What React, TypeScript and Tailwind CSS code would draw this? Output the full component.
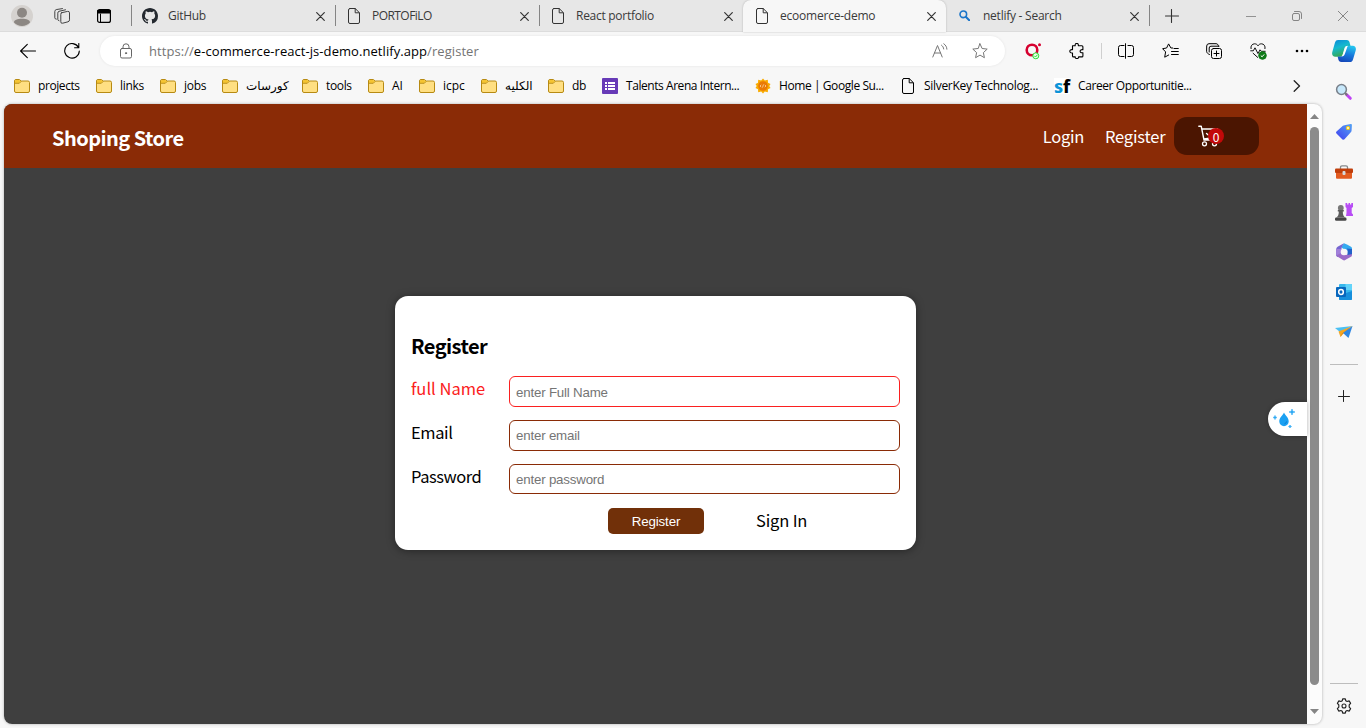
import React from "react";

type SvgProps = { className?: string; children: React.ReactNode; box?: string };

function Line({ className = "size-4", children, box = "0 0 16 16" }: SvgProps) {
  return (
    <svg viewBox={box} className={className} fill="none" stroke="currentColor" strokeLinecap="round" strokeLinejoin="round">
      {children}
    </svg>
  );
}

const Close = () => (
  <Line className="size-[9px] text-[#333]" box="0 0 9 9">
    <path d="M.7.7l7.6 7.6M8.3.7L.7 8.3" strokeWidth="1.2" />
  </Line>
);

const Page = () => (
  <Line className="h-4 w-3 shrink-0" box="0 0 12 16">
    <path d="M2 .5h5.200l4.300 4.300v9.200a1.500 1.500 0 0 1-1.500 1.500H2A1.500 1.500 0 0 1 .5 14V2A1.500 1.500 0 0 1 2 .5zM7.200.8V4.800h4" strokeWidth="1" />
  </Line>
);

const Folder = () => (
  <svg viewBox="0 0 16 14" className="h-[14px] w-4 shrink-0">
    <path d="M.5 2A1.5 1.5 0 0 1 2 .5h3.2L7.3 2H14a1.5 1.5 0 0 1 1.5 1.5V12a1.5 1.5 0 0 1-1.5 1.5H2A1.5 1.5 0 0 1 .5 12z" fill="#ffdf82" stroke="#b78a12" />
    <path d="M1 2.2A1.2 1.2 0 0 1 2.2 1H5l2 1.4L5.2 4H1z" fill="#f5c431" />
    <path d="M.7 4.3h4.6l2-2" fill="none" stroke="#b78a12" strokeWidth=".9" />
  </svg>
);

const GitHub = () => (
  <svg viewBox="0 0 16 16" className="-ml-[2px] size-4 shrink-0" fill="#24292f">
    <path d="M8 0C3.58 0 0 3.58 0 8c0 3.54 2.29 6.53 5.47 7.59.4.07.55-.17.55-.38 0-.19-.01-.82-.01-1.49-2.01.37-2.53-.49-2.69-.94-.09-.23-.48-.94-.82-1.13-.28-.15-.68-.52-.01-.53.63-.01 1.08.58 1.23.82.72 1.21 1.87.87 2.33.66.07-.52.28-.87.51-1.07-1.78-.2-3.64-.89-3.64-3.95 0-.87.31-1.59.82-2.15-.08-.2-.36-1.02.08-2.12 0 0 .67-.21 2.2.82a7.6 7.6 0 0 1 4 0c1.53-1.04 2.2-.82 2.2-.82.44 1.1.16 1.92.08 2.12.51.56.82 1.27.82 2.15 0 3.07-1.87 3.75-3.65 3.95.29.25.54.73.54 1.48 0 1.07-.01 1.93-.01 2.2 0 .21.15.46.55.38A8.01 8.01 0 0 0 16 8c0-4.42-3.58-8-8-8z" />
  </svg>
);

const BingSearch = () => (
  <Line className="size-[11px] text-[#1b75c9]" box="0 0 11 11">
    <circle cx="4.3" cy="4.3" r="3.3" strokeWidth="1.6" />
    <path d="M7 7l3.2 3.2" strokeWidth="2" />
  </Line>
);

type TabData = { icon: React.ReactNode; title: string; text: string; width: string; active?: boolean; sep?: boolean };

const tabs: TabData[] = [
  { icon: <GitHub />, title: "GitHub", text: "tracking-[-0.3px]", width: "w-[204px]", sep: true },
  { icon: <Page />, title: "PORTOFiLO", text: "tracking-[-0.55px]", width: "w-[204px]", sep: true },
  { icon: <Page />, title: "React portfolio", text: "tracking-[-0.28px]", width: "w-[204px]", sep: true },
  { icon: <Page />, title: "ecoomerce-demo", text: "tracking-[-0.22px]", width: "w-[203px]", active: true },
  { icon: <BingSearch />, title: "netlify - Search", text: "tracking-[-0.25px]", width: "w-[203px]" },
];

function Tab({ tab }: { tab: TabData }) {
  const shape = tab.active ? "bg-[#f7f7f7] rounded-t-lg h-8 pb-px shadow-[0_0_2px_rgba(0,0,0,0.25)] z-10" : "h-[31px]";
  return (
    <div className={`flex shrink-0 items-center ${tab.width} ${shape}`}>
      <div className={`h-[21px] w-px ${tab.sep ? "bg-[#858585]" : ""}`} />
      <div className="ml-[10px] flex w-4 justify-start pl-[2px] text-[#333]">{tab.icon}</div>
      <div className={`ml-[10px] flex-1 whitespace-nowrap text-[12px] leading-4 text-[#3a3a3a] ${tab.text}`}>{tab.title}</div>
      <div className="mr-[10px] pt-px"><Close /></div>
    </div>
  );
}

function TabStrip() {
  return (
    <div className="flex h-8 shrink-0 items-start border-b border-[#dcdcdc] bg-[#e7e7e7]">
      <div className="flex h-[31px] w-[131px] shrink-0 items-center">
        <svg viewBox="0 0 22 22" className="ml-[11px] size-[22px]">
          <circle cx="11" cy="11" r="11" fill="#d5d2cf" />
          <circle cx="11" cy="7.7" r="5" fill="#8c8783" />
          <path d="M3 17.6c0-2.7 3.2-3.8 8-3.8s8 1.1 8 3.8A11 11 0 0 1 11 21a11 11 0 0 1-8-3.400z" fill="#8c8783" />
        </svg>
        <Line className="ml-[21px] h-4 w-[17px] text-[#444]" box="0 0 17 16">
          <path d="M7.5 4.8l6-1.4a1.6 1.6 0 0 1 2 1.500v6.900a2 2 0 0 1-1.500 2l-5.300 1.400a1.500 1.500 0 0 1-1.900-1.500V6.700c0-.9.100-1.700.700-1.900z" />
          <path d="M5 12.800a1.500 1.500 0 0 1-1.200-1.500V5.200c0-1 .4-1.700 1.200-1.900L11.500 1.800M2.300 11.200A1.500 1.500 0 0 1 .8 9.800V3.500c0-1 .6-1.700 1.400-1.900L8.500.6" />
        </Line>
        <Line className="ml-[26px] h-[14px] w-[14px] text-black" box="0 0 14 14">
          <rect x=".6" y=".6" width="12.800" height="12.800" rx="2" strokeWidth="1.200" />
          <path d="M1 2h12M1 3.500h12" strokeWidth="1.800" />
          <path d="M3.500 5v8" />
        </Line>
      </div>
      {tabs.map((t) => <Tab key={t.title} tab={t} />)}
      <div className="flex h-[31px] flex-1 items-center">
        <div className="h-[21px] w-px bg-[#858585]" />
        <Line className="ml-[15px] size-[14px] text-[#333]" box="0 0 14 14"><path d="M6.500 .5v13M.5 7h13" strokeWidth="1.100" /></Line>
        <Line className="ml-[67px] size-[10px] text-[#929292]" box="0 0 10 10"><path d="M0 5.500h10" /></Line>
        <Line className="ml-[36px] size-[10px] text-[#858585]" box="0 0 10 10">
          <rect x=".5" y="2.500" width="7" height="7" rx="1.500" />
          <path d="M2.500.5H7A2.500 2.500 0 0 1 9.500 3v4.500" />
        </Line>
        <Line className="ml-[36px] size-[10px] text-[#858585]" box="0 0 10 10"><path d="M.3.3l9.400 9.400M9.700.3L.3 9.700" /></Line>
      </div>
    </div>
  );
}

const Star = ({ className }: { className: string }) => (
  <Line className={className}>
    <path d="M8 .8l2.100 4.700 5.100.6-3.800 3.500 1 5.100L8 12.100l-4.400 2.600 1-5.100L.8 6.100l5.100-.6z" />
  </Line>
);

function Toolbar() {
  return (
    <div className="flex h-[39px] shrink-0 items-center pb-px">
      <Line className="ml-[20px] h-4 w-4 text-black"><path d="M15.500 8H.7M7.300 1.300L.6 8l6.700 6.700" strokeWidth="1.100" /></Line>
      <Line className="ml-[28px] size-4 text-black">
        <path d="M14.500 4.500A7.300 7.300 0 1 0 15.300 8M14.800.5v4.200h-4.200" strokeWidth="1.100" />
      </Line>
      <div className="ml-[20px] flex h-[30px] w-[905px] items-center rounded-full bg-white shadow-[0_0_3px_rgba(0,0,0,0.08)]">
        <Line className="ml-[20px] h-4 w-3 text-[#666]" box="0 0 12 16">
          <rect x=".5" y="5.500" width="11" height="9.500" rx="1.500" />
          <path d="M3 5.500V3.800a3 3 0 0 1 6 0v1.700" />
          <circle cx="6" cy="10.200" r=".6" fill="currentColor" />
        </Line>
        <div className="ml-[17px] flex-1 whitespace-nowrap text-[13px] leading-5 tracking-[0.065px] text-[#747474]">
          https://<span className="text-black">e-commerce-react-js-demo.netlify.app</span>/register
        </div>
        <svg viewBox="0 0 16 16" className="size-4" fill="none" stroke="#777">
          <path d="M.8 14L5.500 2.500 10.200 14M2.400 10h6.200M9.500 2.200c1.300.9 2 2.200 2.200 3.800M11.800.8c2 1.300 3 3.200 3.100 5.400" strokeLinecap="round" />
        </svg>
        <Star className="ml-[24px] mr-[17px] size-4 text-[#777]" />
      </div>
      <svg viewBox="0 0 17 17" className="ml-[20px] size-[17px]">
        <circle cx="7" cy="7" r="5.300" fill="none" stroke="#d6002f" strokeWidth="2.600" />
        <circle cx="14.500" cy="1.800" r="1.500" fill="#d6002f" />
        <circle cx="10.800" cy="12.800" r="3" fill="#e4ffe4" stroke="#2be038" />
        <path d="M9.300 12.800l1.200 1.200 2-2.300" fill="none" stroke="#2be038" />
      </svg>
      <Line className="ml-[27px] h-4 w-4 text-black">
        <path d="M3.500 2.800h2.700c-.3-1.700.5-2.400 1.500-2.400s1.900.7 1.600 2.400h3.600a1 1 0 0 1 1 1v2.900c-1.700-.3-2.800.4-2.800 1.500s1.100 1.800 2.800 1.500v3.200a1 1 0 0 1-1 1H9.600c.2 1-.7 1.700-1.700 1.700s-1.900-.7-1.700-1.700H4.500a1 1 0 0 1-1-1V10C1.800 10.200.8 9.400.8 8.300s1-1.900 2.700-1.600z" strokeWidth="1.100" />
      </Line>
      <div className="ml-[16px] h-4 w-px bg-[#cfcfcf]" />
      <Line className="ml-[16px] h-4 w-4 text-black">
        <path d="M6 2.500H2.500a2 2 0 0 0-2 2v7a2 2 0 0 0 2 2H6M7.500.7v14.600M10 2.500h3.500a2 2 0 0 1 2 2v7a2 2 0 0 1-2 2H10" />
      </Line>
      <Line className="ml-[28px] h-4 w-[17px] text-black" box="0 0 17 16">
        <path d="M10.700 5H8.900L6.600.9 4.600 5 .6 5.700l3 3.200-.9 5.300 4-2.200M9.500 8.500h6.800M9.500 11.500h6.800M12 5.500h4.300" />
      </Line>
      <Line className="ml-[27px] size-4 text-black">
        <rect x="5.500" y="5.500" width="10" height="10" rx="2" />
        <path d="M10.500 8v5M8 10.500h5M3.500 11.500C2 11 .7 9.800.6 8.300L.7 3A2.400 2.400 0 0 1 3 .7h7.100c1.300 0 2.200 1 2.400 2.500M3.200 9V5a1.800 1.800 0 0 1 1.800-1.800h8" />
      </Line>
      <svg viewBox="0 0 17 17" className="ml-[28px] size-[17px]" fill="none" stroke="#111">
        <path d="M1.100 6C.3 3 2.200.8 4.600.8 6.200.8 7.400 1.700 8 2.800 8.600 1.700 9.800.8 11.400.8c2.400 0 4.300 2.200 3.500 5.200M2.800 10L8 14.700M.3 7.800h3L5 4.800l3 5.800 2-3.800 1.300 1.500h4.300" />
        <circle cx="12.500" cy="12.500" r="3.800" fill="#0f7a18" stroke="#0f7a18" />
        <path d="M10.800 12.600l1.300 1.200 2.100-2.400" stroke="#fff" />
      </svg>
      <svg viewBox="0 0 14 4" className="ml-[28px] h-1 w-[14px]"><circle cx="2" cy="2" r="1.300" /><circle cx="7" cy="2" r="1.300" /><circle cx="12" cy="2" r="1.300" /></svg>
      <svg viewBox="0 0 24 22" className="ml-[23px] h-[22px] w-6">
        <defs>
          <linearGradient id="cpA" x1="0" y1="0" x2=".4" y2="1"><stop stopColor="#0a86d8" /><stop offset=".5" stopColor="#15b9cf" /><stop offset="1" stopColor="#37a84e" /></linearGradient>
          <linearGradient id="cpB" x1=".6" y1="0" x2=".3" y2="1"><stop stopColor="#23c3ee" /><stop offset=".5" stopColor="#1778dc" /><stop offset="1" stopColor="#1546b8" /></linearGradient>
        </defs>
        <path d="M6 0h8.500c2.300 0 3 1.600 3.500 4l.5 2h-3c-2 0-2.700 1-3.200 2.700l-1.500 5.200c-.7 2-1.600 2.800-3.300 2.800H3.300C.7 16.700-.4 14.500.3 12L3 2.600C3.600.8 4.600 0 6 0z" fill="url(#cpA)" />
        <path d="M18 22H9.500c-2.300 0-3-1.600-3.500-4l-.4-1.500h3c2 0 2.700-1 3.200-2.700l1.500-5.200c.7-2 1.600-2.800 3.300-2.800h4.100c2.600 0 3.700 2.200 3 4.700L21 19.400c-.6 1.800-1.600 2.600-3 2.600z" fill="url(#cpB)" />
        <path d="M11.200 13.800L13 7.900c.5-1.500 1.200-2 2.800-2.100l-3 8.200c-.6 1.700-1.300 2.300-3 2.400.7-.6 1.100-1.500 1.400-2.600z" fill="#fff" />
      </svg>
    </div>
  );
}

const Forms = () => (
  <svg viewBox="0 0 16 16" className="size-4 shrink-0">
    <rect width="16" height="16" rx="1" fill="#673ab7" />
    <path d="M3 4h2v2H3zM6 4h7v2H6zM3 7h2v2H3zM6 7h7v2H6zM3 10h2v2H3zM6 10h7v2H6z" fill="#fff" />
  </svg>
);

const Sun = () => (
  <svg viewBox="0 0 16 16" className="size-4 shrink-0">
    <path d="M8 .5l1.800 1.900 3-.7.2 3 2.500 1.300L14.300 8l1.200 2-2.500 1.300-.2 3-3-.7L8 15.500l-1.800-1.900-3 .7-.2-3L.5 10l1.200-2L.5 6 3 4.700l.2-3 3 .7z" fill="#f9ab00" />
    <circle cx="8" cy="8" r="4.800" fill="#ea7a06" />
    <path d="M6.200 6.800L5 8l1.200 1.200M9.800 6.800L11 8 9.800 9.200M8.500 6.500l-1 3" fill="none" stroke="#fde5bd" strokeWidth=".7" />
  </svg>
);

const SfLogo = () => (
  <span className="flex h-4 w-4 shrink-0 items-center justify-center bg-white font-['Noto_Sans'] text-[18px] font-extrabold leading-4 tracking-[-0.3px] text-[#0d94d8]">
    s<span className="text-black">f</span>
  </span>
);

const bookmarks = [
  { name: "projects", width: "w-[82px]", text: "tracking-[-0.42px]", icon: <Folder /> },
  { name: "links", width: "w-[64px]", text: "tracking-[-0.3px]", icon: <Folder /> },
  { name: "jobs", width: "w-[62px]", text: "tracking-[-0.3px]", icon: <Folder /> },
  { name: "كورسات", width: "w-[80px]", text: "text-[11.500px]", icon: <Folder /> },
  { name: "tools", width: "w-[66px]", text: "tracking-[-0.35px]", icon: <Folder /> },
  { name: "AI", width: "w-[51px]", text: "tracking-[-0.1px]", icon: <Folder /> },
  { name: "icpc", width: "w-[62px]", text: "tracking-[0px]", icon: <Folder /> },
  { name: "الكليه", width: "w-[67px]", text: "text-[11.500px]", icon: <Folder /> },
  { name: "db", width: "w-[54px]", text: "tracking-[-0.3px]", icon: <Folder /> },
  { name: "Talents Arena Intern...", width: "w-[153px]", text: "tracking-[-0.44px]", icon: <Forms /> },
  { name: "Home | Google Su...", width: "w-[147px]", text: "tracking-[-0.42px]", icon: <Sun /> },
  { name: "SilverKey Technolog...", width: "w-[152px]", text: "-ml-[2px] tracking-[-0.3px]", icon: <Page /> },
  { name: "Career Opportunitie...", width: "w-[239px]", text: "tracking-[-0.4px]", icon: <SfLogo /> },
];

function Bookmarks() {
  return (
    <div className="flex h-[33px] shrink-0 items-center pb-1 pl-[14px]">
      {bookmarks.map((b) => (
        <div key={b.name} className={`flex shrink-0 items-center text-black ${b.width}`}>
          <span className="flex w-6 shrink-0">{b.icon}</span>
          <span className={`whitespace-nowrap text-[12px] leading-4 ${b.text}`}>{b.name}</span>
        </div>
      ))}
      <Line className="h-3 w-2 text-[#222]" box="0 0 8 12"><path d="M1.200.8L6.500 6l-5.300 5.200" strokeWidth="1.300" /></Line>
    </div>
  );
}

function StoreHeader() {
  return (
    <header className="flex h-[63.5px] shrink-0 items-center bg-[#8a2b06] pl-12 pr-[48px] text-white">
      <h1 className="flex-1 pt-1 text-[20px] font-bold leading-7 tracking-[-0.54px]">Shoping Store</h1>
      <a className="text-[16.500px] leading-6 tracking-[-0.3px]">Login</a>
      <a className="ml-[21px] w-[60px] whitespace-nowrap text-[16.500px] leading-6 tracking-[-0.2px]">Register</a>
      <button className="relative ml-[9px] flex h-[38px] w-[85px] items-center rounded-[13px] bg-[#4b1501] pl-6">
        <Line className="h-[22px] w-[22px] text-white" box="0 0 22 22">
          <path d="M.8 1.200h2.400L6 15h12M4 4h15.500l-2.500 8.500L6 14M8.500 8.500l3 2.500 3-3" strokeWidth="1.400" />
          <circle cx="6.500" cy="18.800" r="2" strokeWidth="1.300" />
          <circle cx="16.500" cy="18.800" r="2" strokeWidth="1.300" />
        </Line>
        <span className="absolute left-[34px] top-[11px] flex size-4 items-center justify-center rounded-full bg-[#c30909] pt-[2px] text-[12px] leading-4">0</span>
      </button>
    </header>
  );
}

const fields = [
  { label: "full Name", hint: "enter Full Name", type: "text", color: "text-[#fb2020]", border: "border-[#fb2020]", height: "h-[31px]", text: "tracking-[0px]", inset: "pt-[2px] tracking-[-0.2px]" },
  { label: "Email", hint: "enter email", type: "email", color: "text-black", border: "border-[#8a2b06]", height: "h-[31px]", text: "tracking-[-0.4px]", inset: "tracking-[-0.2px]" },
  { label: "Password", hint: "enter password", type: "password", color: "text-black", border: "border-[#8a2b06]", height: "h-[30px]", text: "tracking-[-0.45px]", inset: "pt-[2px] tracking-[-0.2px]" },
];

function RegisterCard() {
  return (
    <form className="mt-[128px] flex h-[254px] w-[521px] flex-col rounded-[13px] bg-white px-4 pt-[35px] text-black shadow-[0_1px_8px_rgba(0,0,0,0.4)]">
      <h2 className="h-[45px] text-[20px] font-bold leading-[29px] tracking-[-0.55px]">Register</h2>
      <div className="flex flex-col gap-[13px]">
        {fields.map((f) => (
          <label key={f.label} className={`flex items-center ${f.height}`}>
            <span className={`w-[98px] pb-[6px] text-[16.500px] leading-6 ${f.color} ${f.text}`}>{f.label}</span>
            <input
              type={f.type}
              placeholder={f.hint}
              className={`h-full flex-1 rounded-[6px] border bg-white px-[6px] font-['Liberation_Sans',sans-serif] text-[13.333px] placeholder:text-[#757575] ${f.border} ${f.inset}`}
            />
          </label>
        ))}
      </div>
      <div className="mt-[14px] flex items-center pl-[197px]">
        <button className="h-[26px] w-24 rounded-[5px] bg-[#713009] pt-[2px] font-['Liberation_Sans',sans-serif] text-[13.333px] tracking-[-0.15px] text-white">Register</button>
        <a className="ml-[52px] mt-[-2px] text-[16.500px] leading-6 tracking-[-0.15px]">Sign In</a>
      </div>
    </form>
  );
}

function Viewport() {
  return (
    <div className="ml-1 flex h-[620px] w-[1318px] shrink-0 overflow-hidden rounded-lg bg-[#fcfcfc] shadow-[0_0_3px_rgba(0,0,0,0.3)]">
      <main className="relative flex w-[1303px] flex-col bg-[#3f3f3f] font-['Noto_Sans_CJK_JP','Noto_Sans',sans-serif]">
        <StoreHeader />
        <div className="flex flex-1 items-start justify-center">
          <RegisterCard />
        </div>
        <div className="absolute right-0 top-[298px] flex h-[34px] w-[39px] items-center rounded-l-full bg-white pl-[5px] shadow-[0_0_4px_rgba(0,0,0,0.3)]">
          <svg viewBox="0 0 24 22" className="h-[22px] w-6" fill="#1aa0f2">
            <path d="M11 4.500c1 2.700 4.700 5 4.700 9a4.700 4.700 0 0 1-9.400 0c0-4 3.700-6.300 4.700-9z" />
            <path d="M19 1l.8 2.200 2.200.8-2.200.8L19 7l-.8-2.200L16 4l2.200-.8zM2 7.500l.6 1.400L4 9.500l-1.400.6L2 11.500l-.6-1.400L0 9.500l1.400-.6zM17 17l.5 1 1 .5-1 .5-.5 1-.5-1-1-.5 1-.5z" stroke="#5bbcf7" strokeWidth=".9" />
            <path d="M11.500 15.800c1.200-.3 1.900-1.200 2-2.300" fill="none" stroke="#0879cf" />
          </svg>
        </div>
      </main>
      <div className="flex flex-1 flex-col items-center pt-[10px]">
        <svg viewBox="0 0 9 5" className="h-[5px] w-[9px]" fill="#858585"><path d="M4.500 0L9 5H0z" /></svg>
        <div className="mt-2 h-[558px] w-[9px] rounded-full bg-[#8b8b8b]" />
        <svg viewBox="0 0 9 5" className="mt-6 h-[5px] w-[9px]" fill="#858585"><path d="M0 0h9L4.500 5z" /></svg>
      </div>
    </div>
  );
}

const apps = [
  <svg key="search" viewBox="0 0 18 18" className="size-[18px]">
    <path d="M11.500 11.500l3.800 3.800" stroke="#c043f5" strokeWidth="3" strokeLinecap="round" />
    <path d="M10 10l2.200 2.200" stroke="#777" strokeWidth="2" />
    <circle cx="6.500" cy="6.500" r="4.900" fill="#c7e8fb" stroke="#79808a" strokeWidth="1.500" />
  </svg>,
  <svg key="tag" viewBox="0 0 18 18" className="size-[18px]">
    <defs><linearGradient id="tagFill" x1="1" y1="0" x2="0" y2="1"><stop stopColor="#55a4f4" /><stop offset="1" stopColor="#403df0" /></linearGradient></defs>
    <path d="M9.500 2.200L15.500 1c1-.1 1.500.4 1.400 1.400l-.3 5.200c0 .7-.3 1.200-.8 1.700l-6.300 7c-.6.600-1.400.700-2 .1l-6-6c-.6-.6-.6-1.300 0-1.900l6.400-5.700c.5-.4 1-.6 1.600-.6z" fill="url(#tagFill)" />
    <circle cx="13" cy="5" r="1.700" fill="#fff3a4" stroke="#f3c81a" />
  </svg>,
  <svg key="tools" viewBox="0 0 18 16" className="h-4 w-[18px]">
    <path d="M5.500 5V3.300c0-1 .5-1.500 1.500-1.500h4c1 0 1.500.5 1.500 1.500V5" fill="none" stroke="#85898c" strokeWidth="1.300" />
    <path d="M1 8h16v5.500c0 .8-.5 1.300-1.300 1.300H2.300C1.500 14.800 1 14.300 1 13.500z" fill="#e25b20" />
    <rect y="4.500" width="18" height="4.500" rx="1" fill="#c03e0b" />
    <rect x="7.500" y="7" width="3" height="4" rx="1" fill="#d5dade" />
  </svg>,
  <svg key="games" viewBox="0 0 18 18" className="size-[18px]">
    <path d="M10.500 0h1.700v1.500h1.300V0H15v1.500h1.300V0H18v4l-1.300 1v5l1.300 1.500V13h-7l.5-3V5l-1-1z" fill="#b84cf5" />
    <circle cx="5.800" cy="5" r="2.900" fill="#777" />
    <path d="M2.800 7h6v1.500H7.800c0 3 .6 4.700 2.500 6.100H1.300c1.900-1.400 2.500-3.100 2.500-6.100h-1z" fill="#5b5b5b" />
    <rect y="14.500" width="11.500" height="3.300" rx="1.300" fill="#454545" />
  </svg>,
  <svg key="m365" viewBox="0 0 18 18" className="size-[18px]">
    <path d="M9 .3L12 1.500l4 2.300c.8.500 1 1.100 1 1.900V10l-5.500-3-3-1L6 4z" fill="#35aaf0" />
    <path d="M9 .3L3 3.500C2 4.100 1.500 4.800 1.200 6v6c0 1 .5 1.500 1.300 2L6.500 11V6c0-2.500 1.500-4 2.500-5.700z" fill="#7565d0" />
    <path d="M1.200 11.500c.2 1 .6 1.700 1.500 2.300L8 17c.7.500 1.500.500 2.200 0L16 13.800c.8-.5 1-1.200 1-2.300V9.500l-6 2.500-4.500-1.500z" fill="#9a6bc8" />
    <path d="M1.200 6v6.500L6.300 10V6z" fill="#a17fd9" />
    <path d="M17 6v5l-4.500 1V6.500l-1-1z" fill="#2161c9" />
    <circle cx="9" cy="9" r="3.300" fill="#f7f7f7" />
  </svg>,
  <svg key="outlook" viewBox="0 0 18 18" className="size-[18px]">
    <rect x="4" y="1" width="13" height="16" rx="1" fill="#38b8ec" />
    <path d="M10.500 1H16a1 1 0 0 1 1 1v5h-6.500z" fill="#63d4fa" />
    <path d="M4 10h7l6-2v8a1 1 0 0 1-1 1H5a1 1 0 0 1-1-1z" fill="#168fdc" />
    <rect x="1" y="4" width="10" height="10" rx="1" fill="#0867bd" />
    <ellipse cx="6" cy="9" rx="2.300" ry="2.500" fill="none" stroke="#fff" strokeWidth="1.500" />
  </svg>,
  <svg key="drop" viewBox="0 0 18 16" className="h-4 w-[18px]">
    <path d="M0 4L17.500 2 5 8z" fill="#4bc0f3" />
    <path d="M17.500 2L3.500 7.500 5.500 13l2.500-3z" fill="#f5a623" />
    <path d="M17.500 2L8 9.500 5.500 13 7 9.500z" fill="#d68112" />
    <path d="M17.500 2L8 9l5.500 5z" fill="#2d86e3" />
  </svg>,
];

function Sidebar() {
  return (
    <aside className="-mt-8 flex h-[656px] w-[44px] shrink-0 flex-col items-center">
      {apps.map((a, i) => <div key={i} className="flex h-10 w-full items-center justify-center">{a}</div>)}
      <div className="mt-3 h-px w-7 bg-[#bdbdbd]" />
      <Line className="mt-[25px] size-3 text-[#222]" box="0 0 12 12"><path d="M5.500 .5v11M.5 6.500h11" /></Line>
      <div className="mt-auto h-px w-7 bg-[#bdbdbd]" />
      <Line className="mb-[14px] mt-[14px] size-4 text-[#222]">
        <circle cx="8" cy="8" r="2" strokeWidth="1.100" />
        <path d="M6.700.8h2.600l.5 2 1.300.7 2-.6 1.500 2.400-1.400 1.600v2.200l1.400 1.600-1.500 2.400-2-.6-1.300.7-.5 2H6.700l-.5-2-1.300-.7-2 .6-1.500-2.400 1.400-1.600V6.900L1.400 5.300l1.500-2.400 2 .6 1.300-.7z" strokeWidth="1.200" />
      </Line>
    </aside>
  );
}

export default function App() {
  return (
    <div className="flex h-[728px] w-[1366px] flex-col overflow-hidden bg-[#f7f7f7] font-['Open_Sans','Noto_Sans','DejaVu_Sans',sans-serif]">
      <TabStrip />
      <Toolbar />
      <Bookmarks />
      <div className="flex h-[624px]">
        <Viewport />
        <Sidebar />
      </div>
    </div>
  );
}
